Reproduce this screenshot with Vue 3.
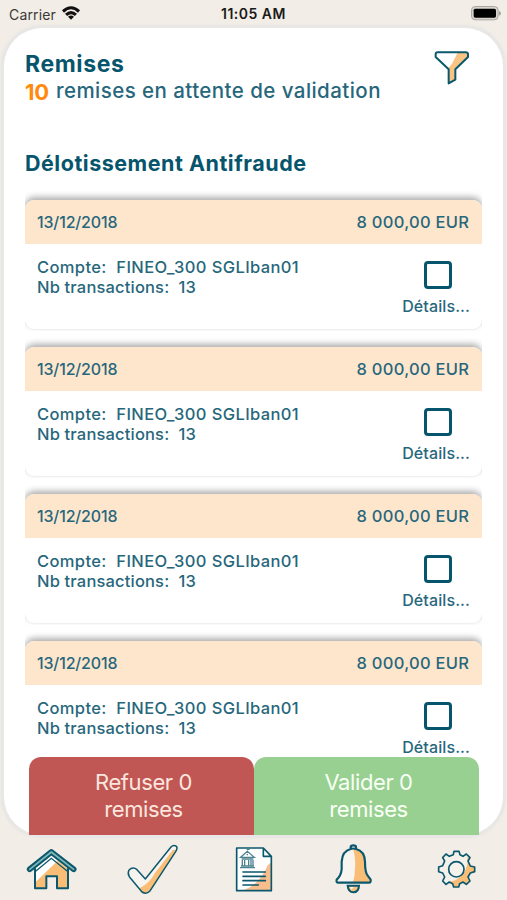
<script setup>
const cards = Array.from({ length: 4 }, (_, id) => ({
  id,
  date: '13/12/2018',
  amount: '8 000,00 EUR',
  account: 'FINEO_300 SGLIban01',
  count: 13,
}))
</script>

<template>
  <div class="screen">
    <header class="status">
      <div class="carrier">
        <span class="carrier-name">Carrier</span>
        <svg class="wifi" viewBox="0 0 54 42">
          <path d="M0 13 Q27 -12 54 13 L48 20 Q27 0 6 20Z" />
          <path d="M9 23 Q27 7 45 23 L38.500 30 Q27 20 15.500 30Z" />
          <path d="M18 32 Q27 25 36 32 L27 41Z" />
        </svg>
      </div>
      <strong class="clock">11:05 AM</strong>
      <svg class="battery" viewBox="0 0 90 45">
        <rect x="1.500" y="1.500" width="80" height="40" rx="11" fill="#d8d4cd" stroke="#aaa7a2" stroke-width="3" />
        <rect x="8" y="8" width="67" height="27" rx="5" fill="#000" />
        <path d="M84 14 Q90 17 90 21.500 Q90 26 84 29Z" fill="#a5a29d" />
      </svg>
    </header>

    <main class="panel">
      <div class="heading">
        <div>
          <h1>Remises</h1>
          <p class="summary"><b>10</b><span>remises en attente de validation</span></p>
        </div>
        <svg class="filter" viewBox="0 0 165 165">
          <path d="M99 36 H124 Q129 37 129 46 V54 L91 88 V119 L70 130 V85 L82 70Z" fill="#f8c383" />
          <path d="M38 37 H122 Q129 37 129 43 V51 L91 88 V119 L71 130 V88 L32 51 V43 Q32 37 38 37Z" fill="none" stroke="#0b586e" stroke-width="6" stroke-linejoin="round" />
        </svg>
      </div>
      <h2>Délotissement Antifraude</h2>

      <section class="list">
        <article v-for="c in cards" :key="c.id" class="slot">
          <div class="card">
            <div class="card-head">
              <span class="date">{{ c.date }}</span>
              <span class="amount">{{ c.amount }}</span>
            </div>
            <div class="card-body">
              <div class="info">
                <p class="account">Compte:&nbsp; {{ c.account }}</p>
                <p class="count">Nb transactions:&nbsp; {{ c.count }}</p>
              </div>
              <div class="pick">
                <span class="box"></span>
                <span class="details">Détails...</span>
              </div>
            </div>
          </div>
        </article>
      </section>

      <div class="actions">
        <button class="refuse">Refuser 0<br />remises</button>
        <button class="accept">Valider 0<br />remises</button>
      </div>
    </main>

    <nav class="tabs">
      <svg viewBox="0 0 270 195">
        <path d="M60 102 L109 62 L159 102 V160 H126 V124 H94 V160 H60Z" fill="#fff" />
        <path d="M128 77 L159 102 V160 H126 V124 H94 V160 H62 V141Z" fill="#f9bd75" />
        <path d="M60 101 V160 H94 V124 H126 V160 H159 V101" class="ln" stroke-width="6" />
        <path d="M44 103 L109 51 L176 103" fill="none" stroke="#0b586e" stroke-width="17" stroke-linecap="round" stroke-linejoin="round" />
        <path d="M44 103 L109 51 L176 103" fill="none" stroke="#83b9b7" stroke-width="5" stroke-linecap="round" stroke-linejoin="round" />
        <path d="M60 110 L109 70 L159 110" fill="none" stroke="#0b586e" stroke-width="4" />
      </svg>
      <svg viewBox="0 0 270 195">
        <path d="M42 105 Q54 94 66 104 L91 132 L168 36 Q176 28 185 35 Q188 40 182 50 L104 169 Q94 179 81 171 L43 125 Q37 115 42 105Z" fill="#f7f4ef" />
        <path d="M174 44 L184 46 L104 169 Q94 179 81 171 L74 160 Q103 145 120 114Z" fill="#f9bd75" />
        <path d="M42 105 Q54 94 66 104 L91 132 L168 36 Q176 28 185 35 Q188 40 182 50 L104 169 Q94 179 81 171 L43 125 Q37 115 42 105Z" class="ln" stroke-width="4.500" />
      </svg>
      <svg viewBox="0 0 270 195">
        <path d="M65 39 H145 L169 64 V167 H65Z" fill="#fff" />
        <path d="M169 82 V167 H83 Q135 148 158 91Z" fill="#f7bd8d" />
        <path d="M65 39 H145 L169 64 V167 H65Z M145 39 V64 H169" class="ln" stroke-width="5" />
        <path d="M84 111 H151 M84 124 H151 M84 137 H151 M84 150 H130" class="ln" stroke-width="5" />
        <g fill="none" stroke="#4d8290" stroke-width="4">
          <path d="M77 67 L97 49 L118 67Z M80 72 H115 M82 75 V91 M89 75 V91 M101 75 V91 M108 75 V91 M114 75 V91 M78 93 H117 M75 98 H120" />
          <path d="M97 46 V43 H104 M97 57 V61" />
        </g>
      </svg>
      <svg viewBox="0 0 270 195">
        <path d="M107 41 V35 Q108 31 115 31 Q123 31 123 36 V42 Q149 48 150 80 Q150 112 158 122 L168 134 V143 H65 V134 Q78 122 80 103 V80 Q82 48 107 41Z" fill="#f8f5f0" />
        <path d="M114 43 Q123 67 120 102 Q119 133 112 143 H167 V134 L158 122 Q150 110 150 80 Q149 47 124 42Z" fill="#f9bd75" />
        <path d="M107 42 V36 Q107 31 115 31 Q123 31 123 36 V42 Q149 48 150 80 Q150 112 158 122 L167 134 Q168 143 162 143 H70 Q63 143 65 134 Q78 122 80 103 V80 Q82 48 107 42Z M107 42 Q115 39 123 42" class="ln" stroke-width="6.500" />
        <path d="M98 152 H132 Q131 172 115 172 Q100 172 98 152Z" fill="#f7bf7c" stroke="#0b586e" stroke-width="6" />
        <path d="M104 156 H117 L109 164Z" fill="#faf3e8" />
      </svg>
      <svg viewBox="0 0 270 195">
        <path d="M115 59 L117 49 H132 L135 59 L144 64 L154 57 L165 68 L159 78 L166 93 L179 96 V110 L166 114 L159 126 L165 138 L154 148 L144 141 L134 146 L131 156 H116 L113 146 L103 141 L93 148 L83 138 L89 126 L83 114 L71 110 V96 L83 92 L89 78 L83 68 L93 57 L103 64Z" fill="#f4f1eb" />
        <path d="M157 65 L165 68 L159 78 L166 93 L179 96 V110 L166 114 L159 126 L165 138 L154 148 L144 141 L134 146 L131 156 H116 L113 146 L98 140 Q124 141 143 118 Q161 96 157 65Z" fill="#f9bd75" />
        <circle cx="124" cy="103" r="23" fill="#f5f1eb" stroke="#0b586e" stroke-width="5" />
        <path d="M115 59 L117 49 H132 L135 59 L144 64 L154 57 L165 68 L159 78 L166 93 L179 96 V110 L166 114 L159 126 L165 138 L154 148 L144 141 L134 146 L131 156 H116 L113 146 L103 141 L93 148 L83 138 L89 126 L83 114 L71 110 V96 L83 92 L89 78 L83 68 L93 57 L103 64Z" class="ln" stroke-width="5" />
      </svg>
    </nav>
  </div>
</template>

<style>
body { margin: 0; background: #f2ede6; }
</style>

<style scoped>
.screen {
  width: 507px; height: 900px; overflow: hidden;
  display: flex; flex-direction: column;
  background: #f2ede6; color: #27677c;
  font-family: Inter, "Open Sans", sans-serif;
}
h1, h2, p { margin: 0; font-weight: inherit; }
span, p, h2 { white-space: nowrap; }
.status {
  height: 28px; flex: none; box-sizing: border-box;
  padding: 0 6px 0 9px;
  display: grid; grid-template-columns: 1fr auto 1fr; align-items: center;
  color: #1b1a19;
}
.carrier { display: flex; align-items: center; gap: 6px; font-size: 14px; letter-spacing: .15px; color: #3b3936; }
.wifi { width: 18px; height: 14px; fill: #111; margin-top: -2px; }
.clock { font-size: 14px; font-weight: 600; letter-spacing: .5px; margin: -1px 0 0 -3px; }
.battery { width: 30px; height: 15px; justify-self: end; margin-top: -1px; }
.panel {
  width: 499px; height: 807px; flex: none; box-sizing: border-box;
  margin: 0 4px; padding: 0 21px;
  border-radius: 38px; background: #fff;
  box-shadow: 0 0 0 3px #e8e7e5, 0 0 3px 3px #e8e7e5;
  display: flex; flex-direction: column;
}
.heading { height: 120px; display: flex; justify-content: space-between; }
h1 { margin-top: 22px; font-size: 23px; line-height: 28px; font-weight: 700; letter-spacing: .6px; color: #07556d; }
.summary { display: flex; align-items: center; gap: 7px; height: 25px; font-size: 20.500px; font-weight: 500; letter-spacing: .44px; }
.summary span { margin-top: -1px; }
.summary b { color: #ff8a0c; font-size: 22px; font-weight: 700; width: 24px; letter-spacing: -.2px; margin-top: 2px; }
.filter { width: 55px; height: 55px; margin: 12px 2px 0 0; }
h2 { height: 30px; line-height: 31px; font-size: 21.500px; font-weight: 700; letter-spacing: .52px; color: #07556d; }
.list { height: 575px; flex: none; width: 457px; overflow: hidden; padding-top: 13px; box-sizing: border-box; }
.slot { height: 147px; padding-top: 9px; box-sizing: border-box; overflow: hidden; }
.card {
  height: 129px; border-radius: 9px; background: #fff;
  box-shadow: 0 -3px 6px 0 rgba(0, 0, 0, .32), 0 1px 1px rgba(0, 0, 0, .02);
  clip-path: inset(-9px 0 -2px 0);
}
.card-head {
  height: 44px; padding: 0 13px 0 12px; box-sizing: border-box;
  display: flex; justify-content: space-between; align-items: center;
  border-radius: 9px 9px 0 0; background: #fee6cd; font-size: 16px; font-weight: 500;
}
.date { letter-spacing: -.15px; }
.amount { font-size: 16.500px; letter-spacing: .28px; margin-right: -.3px; }
.card-body { height: 85px; padding: 13px 13px 0 12px; box-sizing: border-box; display: flex; justify-content: space-between; }
.info { font-size: 16.500px; line-height: 20px; font-weight: 500; }
.account { letter-spacing: .38px; }
.count { letter-spacing: .17px; }
.pick { display: flex; flex-direction: column; align-items: center; font-size: 16px; font-weight: 500; }
.box { width: 28px; height: 28px; box-sizing: border-box; border: 3px solid #07556d; border-radius: 4px; margin: 4px 0 0 5px; }
.details { line-height: 20px; margin: 7px -1px 0 0; letter-spacing: .1px; }
.actions { display: grid; grid-template-columns: 1fr 1fr; width: 450px; height: 78px; margin: auto 0 0 4px; flex: none; }
button {
  border: 0; padding: 0 0 0 4px; border-radius: 12px 12px 0 0;
  font: 22px/27px Inter, sans-serif; letter-spacing: -.4px; color: #fff;
}
.refuse { background: #c15755; color: #fbe6de; }
.accept { background: #98d091; color: #f8fff5; }
.tabs { display: grid; grid-template-columns: repeat(5, 90px); column-gap: 10px; padding-left: 15px; height: 65px; }
.tabs svg { width: 90px; height: 65px; }
.ln { fill: none; stroke: #0b586e; stroke-linejoin: round; stroke-linecap: round; }
</style>
